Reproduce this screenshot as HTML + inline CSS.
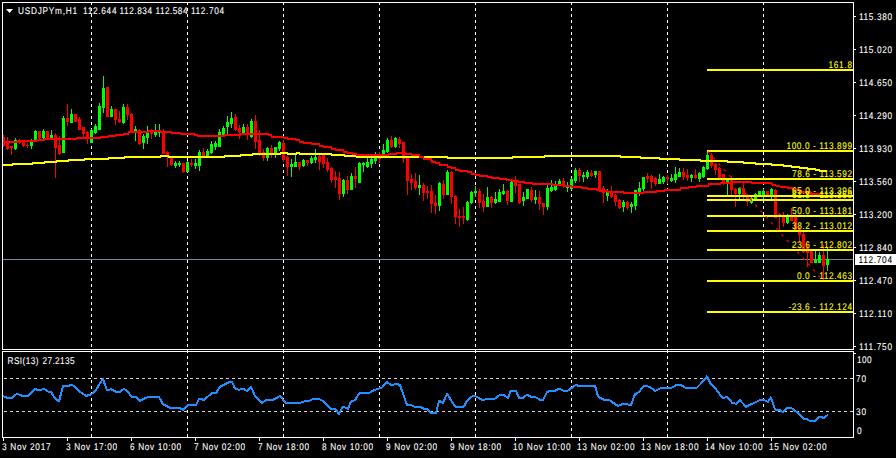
<!DOCTYPE html>
<html><head><meta charset="utf-8"><style>
html,body{margin:0;padding:0;background:#000;width:896px;height:458px;overflow:hidden;position:relative}
text{white-space:pre}
</style></head><body>
<svg width="896" height="458" viewBox="0 0 896 458" style="position:absolute;left:0;top:0" font-family='"Liberation Sans", sans-serif'>
<rect x="0" y="0" width="896" height="458" fill="#000"/>
<g shape-rendering="crispEdges">
<line x1="91.5" y1="2" x2="91.5" y2="349" stroke="#fff" stroke-width="1" stroke-dasharray="3 3" stroke-dashoffset="0"/>
<line x1="91.5" y1="350" x2="91.5" y2="437" stroke="#fff" stroke-width="1" stroke-dasharray="3 3" stroke-dashoffset="0"/>
<line x1="187.5" y1="2" x2="187.5" y2="349" stroke="#fff" stroke-width="1" stroke-dasharray="3 3" stroke-dashoffset="0"/>
<line x1="187.5" y1="350" x2="187.5" y2="437" stroke="#fff" stroke-width="1" stroke-dasharray="3 3" stroke-dashoffset="0"/>
<line x1="283.5" y1="2" x2="283.5" y2="349" stroke="#fff" stroke-width="1" stroke-dasharray="3 3" stroke-dashoffset="0"/>
<line x1="283.5" y1="350" x2="283.5" y2="437" stroke="#fff" stroke-width="1" stroke-dasharray="3 3" stroke-dashoffset="0"/>
<line x1="379.5" y1="2" x2="379.5" y2="349" stroke="#fff" stroke-width="1" stroke-dasharray="3 3" stroke-dashoffset="0"/>
<line x1="379.5" y1="350" x2="379.5" y2="437" stroke="#fff" stroke-width="1" stroke-dasharray="3 3" stroke-dashoffset="0"/>
<line x1="475.5" y1="2" x2="475.5" y2="349" stroke="#fff" stroke-width="1" stroke-dasharray="3 3" stroke-dashoffset="0"/>
<line x1="475.5" y1="350" x2="475.5" y2="437" stroke="#fff" stroke-width="1" stroke-dasharray="3 3" stroke-dashoffset="0"/>
<line x1="571.5" y1="2" x2="571.5" y2="349" stroke="#fff" stroke-width="1" stroke-dasharray="3 3" stroke-dashoffset="0"/>
<line x1="571.5" y1="350" x2="571.5" y2="437" stroke="#fff" stroke-width="1" stroke-dasharray="3 3" stroke-dashoffset="0"/>
<line x1="667.5" y1="2" x2="667.5" y2="349" stroke="#fff" stroke-width="1" stroke-dasharray="3 3" stroke-dashoffset="0"/>
<line x1="667.5" y1="350" x2="667.5" y2="437" stroke="#fff" stroke-width="1" stroke-dasharray="3 3" stroke-dashoffset="0"/>
<line x1="763.5" y1="2" x2="763.5" y2="349" stroke="#fff" stroke-width="1" stroke-dasharray="3 3" stroke-dashoffset="0"/>
<line x1="763.5" y1="350" x2="763.5" y2="437" stroke="#fff" stroke-width="1" stroke-dasharray="3 3" stroke-dashoffset="0"/>
<line x1="4" y1="378.5" x2="853" y2="378.5" stroke="#d3d3d3" stroke-width="1" stroke-dasharray="3 3"/>
<line x1="4" y1="411.5" x2="853" y2="411.5" stroke="#d3d3d3" stroke-width="1" stroke-dasharray="3 3"/>
</g>
<g shape-rendering="crispEdges">
<rect x="3" y="259" width="850" height="1" fill="#778899"/>
</g>
<g shape-rendering="crispEdges">
<rect x="3" y="135" width="1" height="12" fill="#ff0000"/>
<rect x="2" y="137" width="3" height="9" fill="#ff0000"/>
<rect x="7" y="137" width="1" height="13" fill="#ff0000"/>
<rect x="6" y="142" width="3" height="7" fill="#ff0000"/>
<rect x="11" y="146" width="1" height="9" fill="#ff0000"/>
<rect x="10" y="146" width="3" height="2" fill="#ff0000"/>
<rect x="15" y="138" width="1" height="12" fill="#00ff00"/>
<rect x="14" y="140" width="3" height="9" fill="#00ff00"/>
<rect x="19" y="139" width="1" height="5" fill="#ff0000"/>
<rect x="18" y="140" width="3" height="3" fill="#ff0000"/>
<rect x="23" y="141" width="1" height="6" fill="#ff0000"/>
<rect x="22" y="142" width="3" height="4" fill="#ff0000"/>
<rect x="27" y="143" width="1" height="5" fill="#ff0000"/>
<rect x="26" y="145" width="3" height="1" fill="#ff0000"/>
<rect x="31" y="139" width="1" height="10" fill="#00ff00"/>
<rect x="30" y="141" width="3" height="5" fill="#00ff00"/>
<rect x="35" y="130" width="1" height="12" fill="#00ff00"/>
<rect x="34" y="131" width="3" height="10" fill="#00ff00"/>
<rect x="39" y="131" width="1" height="9" fill="#ff0000"/>
<rect x="38" y="131" width="3" height="7" fill="#ff0000"/>
<rect x="43" y="129" width="1" height="10" fill="#00ff00"/>
<rect x="42" y="131" width="3" height="7" fill="#00ff00"/>
<rect x="47" y="131" width="1" height="8" fill="#ff0000"/>
<rect x="46" y="131" width="3" height="7" fill="#ff0000"/>
<rect x="51" y="130" width="1" height="9" fill="#00ff00"/>
<rect x="50" y="135" width="3" height="3" fill="#00ff00"/>
<rect x="55" y="133" width="1" height="45" fill="#ff0000"/>
<rect x="54" y="135" width="3" height="13" fill="#ff0000"/>
<rect x="59" y="136" width="1" height="19" fill="#ff0000"/>
<rect x="58" y="145" width="3" height="9" fill="#ff0000"/>
<rect x="63" y="116" width="1" height="37" fill="#00ff00"/>
<rect x="62" y="118" width="3" height="35" fill="#00ff00"/>
<rect x="67" y="104" width="1" height="22" fill="#ff0000"/>
<rect x="66" y="118" width="3" height="4" fill="#ff0000"/>
<rect x="71" y="109" width="1" height="14" fill="#00ff00"/>
<rect x="70" y="114" width="3" height="9" fill="#00ff00"/>
<rect x="75" y="114" width="1" height="8" fill="#ff0000"/>
<rect x="74" y="114" width="3" height="8" fill="#ff0000"/>
<rect x="79" y="117" width="1" height="13" fill="#ff0000"/>
<rect x="78" y="119" width="3" height="11" fill="#ff0000"/>
<rect x="83" y="127" width="1" height="11" fill="#ff0000"/>
<rect x="82" y="127" width="3" height="7" fill="#ff0000"/>
<rect x="87" y="131" width="1" height="13" fill="#ff0000"/>
<rect x="86" y="132" width="3" height="7" fill="#ff0000"/>
<rect x="91" y="129" width="1" height="14" fill="#00ff00"/>
<rect x="90" y="130" width="3" height="13" fill="#00ff00"/>
<rect x="95" y="124" width="1" height="10" fill="#00ff00"/>
<rect x="94" y="126" width="3" height="7" fill="#00ff00"/>
<rect x="99" y="103" width="1" height="27" fill="#00ff00"/>
<rect x="98" y="106" width="3" height="24" fill="#00ff00"/>
<rect x="103" y="76" width="1" height="37" fill="#00ff00"/>
<rect x="102" y="88" width="3" height="20" fill="#00ff00"/>
<rect x="107" y="87" width="1" height="30" fill="#ff0000"/>
<rect x="106" y="87" width="3" height="30" fill="#ff0000"/>
<rect x="111" y="106" width="1" height="11" fill="#00ff00"/>
<rect x="110" y="109" width="3" height="8" fill="#00ff00"/>
<rect x="115" y="109" width="1" height="16" fill="#ff0000"/>
<rect x="114" y="109" width="3" height="11" fill="#ff0000"/>
<rect x="119" y="111" width="1" height="12" fill="#ff0000"/>
<rect x="118" y="119" width="3" height="3" fill="#ff0000"/>
<rect x="123" y="104" width="1" height="20" fill="#00ff00"/>
<rect x="122" y="107" width="3" height="16" fill="#00ff00"/>
<rect x="127" y="104" width="1" height="16" fill="#ff0000"/>
<rect x="126" y="107" width="3" height="8" fill="#ff0000"/>
<rect x="131" y="113" width="1" height="20" fill="#ff0000"/>
<rect x="130" y="114" width="3" height="19" fill="#ff0000"/>
<rect x="135" y="126" width="1" height="15" fill="#00ff00"/>
<rect x="134" y="129" width="3" height="4" fill="#00ff00"/>
<rect x="139" y="129" width="1" height="16" fill="#ff0000"/>
<rect x="138" y="130" width="3" height="14" fill="#ff0000"/>
<rect x="143" y="134" width="1" height="15" fill="#00ff00"/>
<rect x="142" y="136" width="3" height="7" fill="#00ff00"/>
<rect x="147" y="126" width="1" height="18" fill="#00ff00"/>
<rect x="146" y="132" width="3" height="6" fill="#00ff00"/>
<rect x="151" y="129" width="1" height="10" fill="#ff0000"/>
<rect x="150" y="130" width="3" height="4" fill="#ff0000"/>
<rect x="155" y="124" width="1" height="13" fill="#00ff00"/>
<rect x="154" y="132" width="3" height="3" fill="#00ff00"/>
<rect x="159" y="124" width="1" height="13" fill="#00ff00"/>
<rect x="158" y="132" width="3" height="1" fill="#00ff00"/>
<rect x="163" y="129" width="1" height="25" fill="#ff0000"/>
<rect x="162" y="132" width="3" height="22" fill="#ff0000"/>
<rect x="167" y="151" width="1" height="16" fill="#ff0000"/>
<rect x="166" y="152" width="3" height="5" fill="#ff0000"/>
<rect x="171" y="158" width="1" height="8" fill="#ff0000"/>
<rect x="170" y="158" width="3" height="7" fill="#ff0000"/>
<rect x="175" y="161" width="1" height="7" fill="#00ff00"/>
<rect x="174" y="163" width="3" height="3" fill="#00ff00"/>
<rect x="179" y="161" width="1" height="6" fill="#00ff00"/>
<rect x="178" y="163" width="3" height="2" fill="#00ff00"/>
<rect x="183" y="163" width="1" height="10" fill="#ff0000"/>
<rect x="182" y="163" width="3" height="9" fill="#ff0000"/>
<rect x="187" y="161" width="1" height="11" fill="#00ff00"/>
<rect x="186" y="162" width="3" height="10" fill="#00ff00"/>
<rect x="191" y="159" width="1" height="8" fill="#ff0000"/>
<rect x="190" y="163" width="3" height="2" fill="#ff0000"/>
<rect x="195" y="159" width="1" height="10" fill="#00ff00"/>
<rect x="194" y="163" width="3" height="3" fill="#00ff00"/>
<rect x="199" y="150" width="1" height="21" fill="#00ff00"/>
<rect x="198" y="152" width="3" height="14" fill="#00ff00"/>
<rect x="203" y="148" width="1" height="9" fill="#ff0000"/>
<rect x="202" y="152" width="3" height="5" fill="#ff0000"/>
<rect x="207" y="149" width="1" height="8" fill="#00ff00"/>
<rect x="206" y="151" width="3" height="6" fill="#00ff00"/>
<rect x="211" y="141" width="1" height="13" fill="#00ff00"/>
<rect x="210" y="144" width="3" height="9" fill="#00ff00"/>
<rect x="215" y="141" width="1" height="9" fill="#00ff00"/>
<rect x="214" y="143" width="3" height="4" fill="#00ff00"/>
<rect x="219" y="129" width="1" height="18" fill="#00ff00"/>
<rect x="218" y="132" width="3" height="15" fill="#00ff00"/>
<rect x="223" y="126" width="1" height="10" fill="#00ff00"/>
<rect x="222" y="128" width="3" height="7" fill="#00ff00"/>
<rect x="227" y="116" width="1" height="18" fill="#00ff00"/>
<rect x="226" y="122" width="3" height="5" fill="#00ff00"/>
<rect x="231" y="112" width="1" height="16" fill="#00ff00"/>
<rect x="230" y="118" width="3" height="6" fill="#00ff00"/>
<rect x="235" y="114" width="1" height="17" fill="#ff0000"/>
<rect x="234" y="117" width="3" height="13" fill="#ff0000"/>
<rect x="239" y="125" width="1" height="14" fill="#ff0000"/>
<rect x="238" y="128" width="3" height="4" fill="#ff0000"/>
<rect x="243" y="124" width="1" height="10" fill="#00ff00"/>
<rect x="242" y="127" width="3" height="6" fill="#00ff00"/>
<rect x="247" y="124" width="1" height="16" fill="#ff0000"/>
<rect x="246" y="127" width="3" height="7" fill="#ff0000"/>
<rect x="251" y="119" width="1" height="19" fill="#00ff00"/>
<rect x="250" y="121" width="3" height="16" fill="#00ff00"/>
<rect x="255" y="115" width="1" height="34" fill="#ff0000"/>
<rect x="254" y="121" width="3" height="21" fill="#ff0000"/>
<rect x="259" y="130" width="1" height="26" fill="#ff0000"/>
<rect x="258" y="140" width="3" height="15" fill="#ff0000"/>
<rect x="263" y="149" width="1" height="12" fill="#ff0000"/>
<rect x="262" y="152" width="3" height="6" fill="#ff0000"/>
<rect x="267" y="147" width="1" height="14" fill="#00ff00"/>
<rect x="266" y="148" width="3" height="10" fill="#00ff00"/>
<rect x="271" y="145" width="1" height="13" fill="#ff0000"/>
<rect x="270" y="148" width="3" height="7" fill="#ff0000"/>
<rect x="275" y="147" width="1" height="11" fill="#00ff00"/>
<rect x="274" y="147" width="3" height="7" fill="#00ff00"/>
<rect x="279" y="141" width="1" height="10" fill="#00ff00"/>
<rect x="278" y="142" width="3" height="7" fill="#00ff00"/>
<rect x="283" y="140" width="1" height="22" fill="#ff0000"/>
<rect x="282" y="143" width="3" height="17" fill="#ff0000"/>
<rect x="287" y="156" width="1" height="20" fill="#ff0000"/>
<rect x="286" y="157" width="3" height="10" fill="#ff0000"/>
<rect x="291" y="159" width="1" height="18" fill="#00ff00"/>
<rect x="290" y="164" width="3" height="3" fill="#00ff00"/>
<rect x="295" y="154" width="1" height="13" fill="#00ff00"/>
<rect x="294" y="162" width="3" height="5" fill="#00ff00"/>
<rect x="299" y="162" width="1" height="8" fill="#ff0000"/>
<rect x="298" y="162" width="3" height="5" fill="#ff0000"/>
<rect x="303" y="159" width="1" height="8" fill="#00ff00"/>
<rect x="302" y="160" width="3" height="6" fill="#00ff00"/>
<rect x="307" y="160" width="1" height="6" fill="#ff0000"/>
<rect x="306" y="160" width="3" height="3" fill="#ff0000"/>
<rect x="311" y="156" width="1" height="8" fill="#00ff00"/>
<rect x="310" y="158" width="3" height="5" fill="#00ff00"/>
<rect x="315" y="149" width="1" height="14" fill="#00ff00"/>
<rect x="314" y="157" width="3" height="3" fill="#00ff00"/>
<rect x="319" y="155" width="1" height="15" fill="#ff0000"/>
<rect x="318" y="156" width="3" height="6" fill="#ff0000"/>
<rect x="323" y="154" width="1" height="14" fill="#ff0000"/>
<rect x="322" y="155" width="3" height="9" fill="#ff0000"/>
<rect x="327" y="158" width="1" height="14" fill="#ff0000"/>
<rect x="326" y="162" width="3" height="8" fill="#ff0000"/>
<rect x="331" y="167" width="1" height="16" fill="#ff0000"/>
<rect x="330" y="168" width="3" height="12" fill="#ff0000"/>
<rect x="335" y="171" width="1" height="17" fill="#ff0000"/>
<rect x="334" y="177" width="3" height="3" fill="#ff0000"/>
<rect x="339" y="172" width="1" height="28" fill="#ff0000"/>
<rect x="338" y="178" width="3" height="16" fill="#ff0000"/>
<rect x="343" y="179" width="1" height="18" fill="#00ff00"/>
<rect x="342" y="180" width="3" height="14" fill="#00ff00"/>
<rect x="347" y="176" width="1" height="18" fill="#ff0000"/>
<rect x="346" y="180" width="3" height="10" fill="#ff0000"/>
<rect x="351" y="173" width="1" height="17" fill="#00ff00"/>
<rect x="350" y="176" width="3" height="14" fill="#00ff00"/>
<rect x="355" y="167" width="1" height="21" fill="#ff0000"/>
<rect x="354" y="176" width="3" height="3" fill="#ff0000"/>
<rect x="359" y="162" width="1" height="21" fill="#00ff00"/>
<rect x="358" y="163" width="3" height="20" fill="#00ff00"/>
<rect x="363" y="162" width="1" height="10" fill="#00ff00"/>
<rect x="362" y="163" width="3" height="2" fill="#00ff00"/>
<rect x="367" y="157" width="1" height="11" fill="#00ff00"/>
<rect x="366" y="162" width="3" height="5" fill="#00ff00"/>
<rect x="371" y="157" width="1" height="11" fill="#00ff00"/>
<rect x="370" y="159" width="3" height="5" fill="#00ff00"/>
<rect x="375" y="152" width="1" height="12" fill="#00ff00"/>
<rect x="374" y="157" width="3" height="4" fill="#00ff00"/>
<rect x="379" y="152" width="1" height="11" fill="#ff0000"/>
<rect x="378" y="156" width="3" height="3" fill="#ff0000"/>
<rect x="383" y="144" width="1" height="14" fill="#00ff00"/>
<rect x="382" y="150" width="3" height="7" fill="#00ff00"/>
<rect x="387" y="138" width="1" height="15" fill="#00ff00"/>
<rect x="386" y="140" width="3" height="12" fill="#00ff00"/>
<rect x="391" y="136" width="1" height="12" fill="#ff0000"/>
<rect x="390" y="140" width="3" height="7" fill="#ff0000"/>
<rect x="395" y="137" width="1" height="11" fill="#00ff00"/>
<rect x="394" y="138" width="3" height="9" fill="#00ff00"/>
<rect x="399" y="137" width="1" height="11" fill="#ff0000"/>
<rect x="398" y="139" width="3" height="5" fill="#ff0000"/>
<rect x="403" y="142" width="1" height="21" fill="#ff0000"/>
<rect x="402" y="142" width="3" height="17" fill="#ff0000"/>
<rect x="407" y="158" width="1" height="37" fill="#ff0000"/>
<rect x="406" y="158" width="3" height="23" fill="#ff0000"/>
<rect x="411" y="174" width="1" height="16" fill="#ff0000"/>
<rect x="410" y="179" width="3" height="4" fill="#ff0000"/>
<rect x="415" y="173" width="1" height="17" fill="#ff0000"/>
<rect x="414" y="181" width="3" height="7" fill="#ff0000"/>
<rect x="419" y="175" width="1" height="20" fill="#00ff00"/>
<rect x="418" y="185" width="3" height="3" fill="#00ff00"/>
<rect x="423" y="183" width="1" height="18" fill="#ff0000"/>
<rect x="422" y="185" width="3" height="8" fill="#ff0000"/>
<rect x="427" y="186" width="1" height="13" fill="#ff0000"/>
<rect x="426" y="191" width="3" height="2" fill="#ff0000"/>
<rect x="431" y="185" width="1" height="28" fill="#ff0000"/>
<rect x="430" y="191" width="3" height="13" fill="#ff0000"/>
<rect x="435" y="195" width="1" height="19" fill="#ff0000"/>
<rect x="434" y="203" width="3" height="3" fill="#ff0000"/>
<rect x="439" y="182" width="1" height="29" fill="#00ff00"/>
<rect x="438" y="183" width="3" height="23" fill="#00ff00"/>
<rect x="443" y="180" width="1" height="19" fill="#ff0000"/>
<rect x="442" y="184" width="3" height="11" fill="#ff0000"/>
<rect x="447" y="170" width="1" height="25" fill="#00ff00"/>
<rect x="446" y="172" width="3" height="23" fill="#00ff00"/>
<rect x="451" y="171" width="1" height="33" fill="#ff0000"/>
<rect x="450" y="172" width="3" height="25" fill="#ff0000"/>
<rect x="455" y="195" width="1" height="29" fill="#ff0000"/>
<rect x="454" y="196" width="3" height="21" fill="#ff0000"/>
<rect x="459" y="209" width="1" height="18" fill="#ff0000"/>
<rect x="458" y="216" width="3" height="2" fill="#ff0000"/>
<rect x="463" y="207" width="1" height="17" fill="#ff0000"/>
<rect x="462" y="216" width="3" height="2" fill="#ff0000"/>
<rect x="467" y="201" width="1" height="20" fill="#00ff00"/>
<rect x="466" y="202" width="3" height="18" fill="#00ff00"/>
<rect x="471" y="191" width="1" height="13" fill="#00ff00"/>
<rect x="470" y="192" width="3" height="11" fill="#00ff00"/>
<rect x="475" y="186" width="1" height="11" fill="#00ff00"/>
<rect x="474" y="191" width="3" height="2" fill="#00ff00"/>
<rect x="479" y="189" width="1" height="19" fill="#ff0000"/>
<rect x="478" y="191" width="3" height="12" fill="#ff0000"/>
<rect x="483" y="194" width="1" height="18" fill="#ff0000"/>
<rect x="482" y="201" width="3" height="6" fill="#ff0000"/>
<rect x="487" y="187" width="1" height="20" fill="#00ff00"/>
<rect x="486" y="197" width="3" height="10" fill="#00ff00"/>
<rect x="491" y="196" width="1" height="12" fill="#ff0000"/>
<rect x="490" y="197" width="3" height="6" fill="#ff0000"/>
<rect x="495" y="192" width="1" height="12" fill="#00ff00"/>
<rect x="494" y="199" width="3" height="4" fill="#00ff00"/>
<rect x="499" y="189" width="1" height="13" fill="#00ff00"/>
<rect x="498" y="192" width="3" height="10" fill="#00ff00"/>
<rect x="503" y="184" width="1" height="11" fill="#00ff00"/>
<rect x="502" y="191" width="3" height="3" fill="#00ff00"/>
<rect x="507" y="190" width="1" height="15" fill="#ff0000"/>
<rect x="506" y="191" width="3" height="10" fill="#ff0000"/>
<rect x="511" y="180" width="1" height="22" fill="#00ff00"/>
<rect x="510" y="182" width="3" height="20" fill="#00ff00"/>
<rect x="515" y="176" width="1" height="17" fill="#ff0000"/>
<rect x="514" y="182" width="3" height="4" fill="#ff0000"/>
<rect x="519" y="184" width="1" height="20" fill="#ff0000"/>
<rect x="518" y="184" width="3" height="19" fill="#ff0000"/>
<rect x="523" y="192" width="1" height="14" fill="#00ff00"/>
<rect x="522" y="197" width="3" height="4" fill="#00ff00"/>
<rect x="527" y="189" width="1" height="10" fill="#00ff00"/>
<rect x="526" y="189" width="3" height="10" fill="#00ff00"/>
<rect x="531" y="187" width="1" height="15" fill="#ff0000"/>
<rect x="530" y="190" width="3" height="10" fill="#ff0000"/>
<rect x="535" y="190" width="1" height="14" fill="#00ff00"/>
<rect x="534" y="197" width="3" height="3" fill="#00ff00"/>
<rect x="539" y="191" width="1" height="19" fill="#ff0000"/>
<rect x="538" y="197" width="3" height="7" fill="#ff0000"/>
<rect x="543" y="203" width="1" height="12" fill="#ff0000"/>
<rect x="542" y="203" width="3" height="4" fill="#ff0000"/>
<rect x="547" y="185" width="1" height="25" fill="#00ff00"/>
<rect x="546" y="188" width="3" height="19" fill="#00ff00"/>
<rect x="551" y="180" width="1" height="12" fill="#00ff00"/>
<rect x="550" y="187" width="3" height="4" fill="#00ff00"/>
<rect x="555" y="181" width="1" height="10" fill="#00ff00"/>
<rect x="554" y="186" width="3" height="4" fill="#00ff00"/>
<rect x="559" y="179" width="1" height="7" fill="#00ff00"/>
<rect x="558" y="181" width="3" height="4" fill="#00ff00"/>
<rect x="563" y="178" width="1" height="10" fill="#ff0000"/>
<rect x="562" y="181" width="3" height="5" fill="#ff0000"/>
<rect x="567" y="182" width="1" height="10" fill="#00ff00"/>
<rect x="566" y="185" width="3" height="3" fill="#00ff00"/>
<rect x="571" y="178" width="1" height="12" fill="#00ff00"/>
<rect x="570" y="179" width="3" height="10" fill="#00ff00"/>
<rect x="575" y="168" width="1" height="15" fill="#00ff00"/>
<rect x="574" y="170" width="3" height="11" fill="#00ff00"/>
<rect x="579" y="168" width="1" height="14" fill="#ff0000"/>
<rect x="578" y="170" width="3" height="6" fill="#ff0000"/>
<rect x="583" y="172" width="1" height="10" fill="#00ff00"/>
<rect x="582" y="175" width="3" height="2" fill="#00ff00"/>
<rect x="587" y="170" width="1" height="9" fill="#00ff00"/>
<rect x="586" y="172" width="3" height="5" fill="#00ff00"/>
<rect x="591" y="170" width="1" height="7" fill="#ff0000"/>
<rect x="590" y="173" width="3" height="3" fill="#ff0000"/>
<rect x="595" y="171" width="1" height="7" fill="#00ff00"/>
<rect x="594" y="171" width="3" height="4" fill="#00ff00"/>
<rect x="599" y="171" width="1" height="19" fill="#ff0000"/>
<rect x="598" y="171" width="3" height="19" fill="#ff0000"/>
<rect x="603" y="186" width="1" height="17" fill="#ff0000"/>
<rect x="602" y="188" width="3" height="5" fill="#ff0000"/>
<rect x="607" y="189" width="1" height="12" fill="#00ff00"/>
<rect x="606" y="192" width="3" height="4" fill="#00ff00"/>
<rect x="611" y="186" width="1" height="12" fill="#ff0000"/>
<rect x="610" y="191" width="3" height="6" fill="#ff0000"/>
<rect x="615" y="194" width="1" height="12" fill="#ff0000"/>
<rect x="614" y="195" width="3" height="7" fill="#ff0000"/>
<rect x="619" y="199" width="1" height="10" fill="#ff0000"/>
<rect x="618" y="200" width="3" height="8" fill="#ff0000"/>
<rect x="623" y="200" width="1" height="12" fill="#00ff00"/>
<rect x="622" y="202" width="3" height="5" fill="#00ff00"/>
<rect x="627" y="201" width="1" height="9" fill="#ff0000"/>
<rect x="626" y="202" width="3" height="6" fill="#ff0000"/>
<rect x="631" y="202" width="1" height="11" fill="#00ff00"/>
<rect x="630" y="204" width="3" height="3" fill="#00ff00"/>
<rect x="635" y="190" width="1" height="20" fill="#00ff00"/>
<rect x="634" y="190" width="3" height="16" fill="#00ff00"/>
<rect x="639" y="182" width="1" height="14" fill="#00ff00"/>
<rect x="638" y="188" width="3" height="6" fill="#00ff00"/>
<rect x="643" y="177" width="1" height="16" fill="#00ff00"/>
<rect x="642" y="177" width="3" height="12" fill="#00ff00"/>
<rect x="647" y="173" width="1" height="10" fill="#ff0000"/>
<rect x="646" y="176" width="3" height="3" fill="#ff0000"/>
<rect x="651" y="175" width="1" height="14" fill="#ff0000"/>
<rect x="650" y="176" width="3" height="6" fill="#ff0000"/>
<rect x="655" y="177" width="1" height="9" fill="#ff0000"/>
<rect x="654" y="178" width="3" height="6" fill="#ff0000"/>
<rect x="659" y="174" width="1" height="10" fill="#00ff00"/>
<rect x="658" y="179" width="3" height="5" fill="#00ff00"/>
<rect x="663" y="176" width="1" height="8" fill="#00ff00"/>
<rect x="662" y="177" width="3" height="5" fill="#00ff00"/>
<rect x="667" y="175" width="1" height="9" fill="#ff0000"/>
<rect x="666" y="177" width="3" height="2" fill="#ff0000"/>
<rect x="671" y="174" width="1" height="8" fill="#00ff00"/>
<rect x="670" y="178" width="3" height="3" fill="#00ff00"/>
<rect x="675" y="167" width="1" height="16" fill="#00ff00"/>
<rect x="674" y="174" width="3" height="6" fill="#00ff00"/>
<rect x="679" y="168" width="1" height="9" fill="#00ff00"/>
<rect x="678" y="172" width="3" height="5" fill="#00ff00"/>
<rect x="683" y="168" width="1" height="12" fill="#ff0000"/>
<rect x="682" y="172" width="3" height="5" fill="#ff0000"/>
<rect x="687" y="169" width="1" height="12" fill="#ff0000"/>
<rect x="686" y="175" width="3" height="3" fill="#ff0000"/>
<rect x="691" y="174" width="1" height="8" fill="#00ff00"/>
<rect x="690" y="175" width="3" height="3" fill="#00ff00"/>
<rect x="695" y="169" width="1" height="10" fill="#ff0000"/>
<rect x="694" y="175" width="3" height="3" fill="#ff0000"/>
<rect x="699" y="172" width="1" height="10" fill="#00ff00"/>
<rect x="698" y="173" width="3" height="6" fill="#00ff00"/>
<rect x="703" y="166" width="1" height="12" fill="#00ff00"/>
<rect x="702" y="167" width="3" height="10" fill="#00ff00"/>
<rect x="707" y="150" width="1" height="20" fill="#00ff00"/>
<rect x="706" y="155" width="3" height="14" fill="#00ff00"/>
<rect x="711" y="153" width="1" height="15" fill="#ff0000"/>
<rect x="710" y="155" width="3" height="11" fill="#ff0000"/>
<rect x="715" y="163" width="1" height="12" fill="#ff0000"/>
<rect x="714" y="164" width="3" height="6" fill="#ff0000"/>
<rect x="719" y="167" width="1" height="12" fill="#ff0000"/>
<rect x="718" y="168" width="3" height="10" fill="#ff0000"/>
<rect x="723" y="174" width="1" height="11" fill="#ff0000"/>
<rect x="722" y="174" width="3" height="9" fill="#ff0000"/>
<rect x="727" y="179" width="1" height="16" fill="#00ff00"/>
<rect x="726" y="180" width="3" height="3" fill="#00ff00"/>
<rect x="731" y="176" width="1" height="19" fill="#ff0000"/>
<rect x="730" y="180" width="3" height="10" fill="#ff0000"/>
<rect x="735" y="188" width="1" height="19" fill="#ff0000"/>
<rect x="734" y="189" width="3" height="5" fill="#ff0000"/>
<rect x="739" y="187" width="1" height="13" fill="#00ff00"/>
<rect x="738" y="188" width="3" height="6" fill="#00ff00"/>
<rect x="743" y="182" width="1" height="18" fill="#ff0000"/>
<rect x="742" y="188" width="3" height="8" fill="#ff0000"/>
<rect x="747" y="194" width="1" height="12" fill="#ff0000"/>
<rect x="746" y="195" width="3" height="7" fill="#ff0000"/>
<rect x="751" y="197" width="1" height="7" fill="#00ff00"/>
<rect x="750" y="198" width="3" height="5" fill="#00ff00"/>
<rect x="755" y="193" width="1" height="7" fill="#00ff00"/>
<rect x="754" y="194" width="3" height="6" fill="#00ff00"/>
<rect x="759" y="191" width="1" height="6" fill="#00ff00"/>
<rect x="758" y="191" width="3" height="5" fill="#00ff00"/>
<rect x="763" y="189" width="1" height="10" fill="#00ff00"/>
<rect x="762" y="191" width="3" height="5" fill="#00ff00"/>
<rect x="767" y="191" width="1" height="6" fill="#ff0000"/>
<rect x="766" y="191" width="3" height="5" fill="#ff0000"/>
<rect x="771" y="188" width="1" height="12" fill="#00ff00"/>
<rect x="770" y="189" width="3" height="7" fill="#00ff00"/>
<rect x="775" y="189" width="1" height="29" fill="#ff0000"/>
<rect x="774" y="190" width="3" height="28" fill="#ff0000"/>
<rect x="779" y="213" width="1" height="18" fill="#ff0000"/>
<rect x="778" y="214" width="3" height="3" fill="#ff0000"/>
<rect x="783" y="212" width="1" height="15" fill="#ff0000"/>
<rect x="782" y="216" width="3" height="7" fill="#ff0000"/>
<rect x="787" y="214" width="1" height="10" fill="#00ff00"/>
<rect x="786" y="215" width="3" height="8" fill="#00ff00"/>
<rect x="791" y="208" width="1" height="13" fill="#ff0000"/>
<rect x="790" y="217" width="3" height="4" fill="#ff0000"/>
<rect x="795" y="214" width="1" height="17" fill="#ff0000"/>
<rect x="794" y="215" width="3" height="16" fill="#ff0000"/>
<rect x="799" y="227" width="1" height="16" fill="#ff0000"/>
<rect x="798" y="229" width="3" height="6" fill="#ff0000"/>
<rect x="803" y="232" width="1" height="21" fill="#ff0000"/>
<rect x="802" y="234" width="3" height="18" fill="#ff0000"/>
<rect x="807" y="244" width="1" height="23" fill="#ff0000"/>
<rect x="806" y="248" width="3" height="5" fill="#ff0000"/>
<rect x="811" y="251" width="1" height="12" fill="#ff0000"/>
<rect x="810" y="251" width="3" height="12" fill="#ff0000"/>
<rect x="815" y="251" width="1" height="12" fill="#00ff00"/>
<rect x="814" y="260" width="3" height="3" fill="#00ff00"/>
<rect x="819" y="252" width="1" height="11" fill="#00ff00"/>
<rect x="818" y="255" width="3" height="8" fill="#00ff00"/>
<rect x="823" y="245" width="1" height="37" fill="#ff0000"/>
<rect x="822" y="255" width="3" height="11" fill="#ff0000"/>
<rect x="827" y="247" width="1" height="24" fill="#00ff00"/>
<rect x="826" y="259" width="3" height="6" fill="#00ff00"/>
</g>
<polyline points="3,165 12,165 13,164 32,164 33,163 44,163 45,162 56,162 57,161 68,161 69,160 84,160 85,159 108,159 109,158 124,158 125,157 160,157 161,156 168,156 169,157 224,157 225,156 240,156 241,155 252,155 253,154 280,154 281,153 287,153 288,154 296,154 297,153 299,153 300,154 331,154 332,155 344,155 345,156 356,156 357,157 447,157 448,158 512,158 513,157 544,157 545,156 620,156 621,157 640,157 641,158 659,158 660,159 679,159 680,160 700,160 701,161 727,161 728,162 743,162 744,163 755,163 756,164 771,164 772,165 783,165 784,166 791,166 792,167 799,167 800,168 807,168 808,169 815,169 816,170 819,170 820,171 827,171" fill="none" stroke="#ffff00" stroke-width="2" stroke-linejoin="round" shape-rendering="crispEdges"/>
<polyline points="3,142 19,142 20,141 36,141 37,140 44,140 45,139 76,139 77,138 100,138 101,137 108,137 109,136 115,136 116,135 123,135 124,134 128,134 129,132 148,132 149,131 160,131 161,132 171,132 172,133 180,133 181,134 194,134 195,135 197,135 198,136 224,136 225,135 240,135 241,134 268,134 269,135 271,135 272,137 283,137 284,138 287,138 288,139 295,139 296,140 299,140 300,142 303,142 304,143 311,143 312,144 319,144 320,146 323,146 324,147 331,147 332,149 335,149 336,150 343,150 344,152 347,152 348,153 352,153 353,154 356,154 357,155 388,155 389,154 396,154 397,153 404,153 405,154 411,154 412,155 419,155 420,157 423,157 424,159 431,159 432,162 435,162 436,163 439,163 440,165 447,165 448,167 451,167 452,168 455,168 456,170 459,170 460,171 467,171 468,172 471,172 472,174 475,174 476,175 479,175 480,176 487,176 488,177 491,177 492,178 499,178 500,179 506,179 507,180 512,180 513,181 518,181 519,182 524,182 525,183 532,183 533,184 552,184 553,185 563,185 564,186 571,186 572,187 581,187 582,188 587,188 588,189 596,189 597,190 599,190 600,191 607,191 608,192 623,192 624,193 643,193 644,192 656,192 657,191 664,191 665,190 680,190 681,188 688,188 689,187 696,187 697,186 708,186 709,184 720,184 721,183 731,183 732,182 751,182 752,183 771,183 772,184.5 775,184.5 776,185.5 779,185.5 780,186.5 787,186.5 788,188 792,188 793,189.5 800,189.5 801,191.5 810,191.5 811,193.7 820,193.7 821,197 827,197" fill="none" stroke="#ff0000" stroke-width="2" stroke-linejoin="round" shape-rendering="crispEdges"/>
<g shape-rendering="crispEdges">
<rect x="707" y="69" width="146" height="2" fill="#ffff00"/>
<rect x="707" y="150" width="146" height="2" fill="#ffff00"/>
<rect x="707" y="178" width="146" height="2" fill="#ffff00"/>
<rect x="707" y="195" width="146" height="2" fill="#ffff00"/>
<rect x="707" y="199" width="146" height="2" fill="#ffff00"/>
<rect x="707" y="215" width="146" height="2" fill="#ffff00"/>
<rect x="707" y="230" width="146" height="2" fill="#ffff00"/>
<rect x="707" y="249" width="146" height="2" fill="#ffff00"/>
<rect x="707" y="280" width="146" height="2" fill="#ffff00"/>
<rect x="707" y="311" width="146" height="2" fill="#ffff00"/>
</g>
<line x1="707" y1="150.5" x2="823" y2="280.5" stroke="#ff0000" stroke-width="1.25" stroke-dasharray="2.6 5.3" stroke-dashoffset="-1.5"/>
<g shape-rendering="crispEdges" fill="#fff">
<rect x="2" y="2" width="852" height="1"/>
<rect x="2" y="2" width="1" height="348"/>
<rect x="853" y="2" width="1" height="348"/>
<rect x="2" y="349" width="852" height="1"/>
<rect x="2" y="351" width="852" height="1"/>
<rect x="2" y="351" width="1" height="87"/>
<rect x="853" y="351" width="1" height="87"/>
<rect x="2" y="437" width="852" height="1"/>
<rect x="854" y="16" width="2" height="1"/>
<rect x="854" y="49" width="2" height="1"/>
<rect x="854" y="82" width="2" height="1"/>
<rect x="854" y="115" width="2" height="1"/>
<rect x="854" y="148" width="2" height="1"/>
<rect x="854" y="181" width="2" height="1"/>
<rect x="854" y="214" width="2" height="1"/>
<rect x="854" y="247" width="2" height="1"/>
<rect x="854" y="280" width="2" height="1"/>
<rect x="854" y="313" width="2" height="1"/>
<rect x="854" y="346" width="2" height="1"/>
<rect x="854" y="353" width="2" height="1"/>
<rect x="3" y="438" width="1" height="3"/>
<rect x="67" y="438" width="1" height="3"/>
<rect x="131" y="438" width="1" height="3"/>
<rect x="195" y="438" width="1" height="3"/>
<rect x="259" y="438" width="1" height="3"/>
<rect x="323" y="438" width="1" height="3"/>
<rect x="387" y="438" width="1" height="3"/>
<rect x="451" y="438" width="1" height="3"/>
<rect x="515" y="438" width="1" height="3"/>
<rect x="579" y="438" width="1" height="3"/>
<rect x="643" y="438" width="1" height="3"/>
<rect x="707" y="438" width="1" height="3"/>
<rect x="771" y="438" width="1" height="3"/>
</g>
<rect x="855" y="254" width="41" height="11" fill="#fff" shape-rendering="crispEdges"/>
<text text-rendering="geometricPrecision" transform="scale(0.85,1)" x="21.176" y="14" fill="#fff" font-size="9.7" textLength="69.412" lengthAdjust="spacing" stroke="#fff" stroke-width="0.1">USDJPYm,H1</text>
<text text-rendering="geometricPrecision" transform="scale(0.85,1)" x="97.647" y="14" fill="#fff" font-size="9.7" textLength="39.412" lengthAdjust="spacing" stroke="#fff" stroke-width="0.1">112.644</text>
<text text-rendering="geometricPrecision" transform="scale(0.85,1)" x="140.588" y="14" fill="#fff" font-size="9.7" textLength="38.235" lengthAdjust="spacing" stroke="#fff" stroke-width="0.1">112.834</text>
<text text-rendering="geometricPrecision" transform="scale(0.85,1)" x="182.941" y="14" fill="#fff" font-size="9.7" textLength="37.647" lengthAdjust="spacing" stroke="#fff" stroke-width="0.1">112.584</text>
<text text-rendering="geometricPrecision" transform="scale(0.85,1)" x="224.706" y="14" fill="#fff" font-size="9.7" textLength="38.824" lengthAdjust="spacing" stroke="#fff" stroke-width="0.1">112.704</text>
<text text-rendering="geometricPrecision" transform="scale(0.85,1)" x="1010.588" y="20" fill="#fff" font-size="9.7" textLength="38.824" lengthAdjust="spacing" stroke="#fff" stroke-width="0.1">115.380</text>
<text text-rendering="geometricPrecision" transform="scale(0.85,1)" x="1010.588" y="53" fill="#fff" font-size="9.7" textLength="38.824" lengthAdjust="spacing" stroke="#fff" stroke-width="0.1">115.020</text>
<text text-rendering="geometricPrecision" transform="scale(0.85,1)" x="1010.588" y="86" fill="#fff" font-size="9.7" textLength="38.824" lengthAdjust="spacing" stroke="#fff" stroke-width="0.1">114.650</text>
<text text-rendering="geometricPrecision" transform="scale(0.85,1)" x="1010.588" y="119" fill="#fff" font-size="9.7" textLength="38.824" lengthAdjust="spacing" stroke="#fff" stroke-width="0.1">114.290</text>
<text text-rendering="geometricPrecision" transform="scale(0.85,1)" x="1010.588" y="152" fill="#fff" font-size="9.7" textLength="38.824" lengthAdjust="spacing" stroke="#fff" stroke-width="0.1">113.930</text>
<text text-rendering="geometricPrecision" transform="scale(0.85,1)" x="1010.588" y="185" fill="#fff" font-size="9.7" textLength="38.824" lengthAdjust="spacing" stroke="#fff" stroke-width="0.1">113.560</text>
<text text-rendering="geometricPrecision" transform="scale(0.85,1)" x="1010.588" y="218" fill="#fff" font-size="9.7" textLength="38.824" lengthAdjust="spacing" stroke="#fff" stroke-width="0.1">113.200</text>
<text text-rendering="geometricPrecision" transform="scale(0.85,1)" x="1010.588" y="251" fill="#fff" font-size="9.7" textLength="38.824" lengthAdjust="spacing" stroke="#fff" stroke-width="0.1">112.840</text>
<text text-rendering="geometricPrecision" transform="scale(0.85,1)" x="1010.588" y="284" fill="#fff" font-size="9.7" textLength="38.824" lengthAdjust="spacing" stroke="#fff" stroke-width="0.1">112.470</text>
<text text-rendering="geometricPrecision" transform="scale(0.85,1)" x="1010.588" y="317" fill="#fff" font-size="9.7" textLength="38.824" lengthAdjust="spacing" stroke="#fff" stroke-width="0.1">112.110</text>
<text text-rendering="geometricPrecision" transform="scale(0.85,1)" x="1010.588" y="350" fill="#fff" font-size="9.7" textLength="38.824" lengthAdjust="spacing" stroke="#fff" stroke-width="0.1">111.750</text>
<text text-rendering="geometricPrecision" transform="scale(0.85,1)" x="1010.000" y="263" fill="#000" font-size="9.7" textLength="39.412" lengthAdjust="spacing" stroke="#000" stroke-width="0.1">112.704</text>
<text text-rendering="geometricPrecision" transform="scale(0.85,1)" x="1008.235" y="363" fill="#fff" font-size="9.7" textLength="17.059" lengthAdjust="spacing" stroke="#fff" stroke-width="0.1">100</text>
<text text-rendering="geometricPrecision" transform="scale(0.85,1)" x="1007.059" y="382" fill="#fff" font-size="9.7" textLength="11.765" lengthAdjust="spacing" stroke="#fff" stroke-width="0.1">70</text>
<text text-rendering="geometricPrecision" transform="scale(0.85,1)" x="1007.059" y="415" fill="#fff" font-size="9.7" textLength="11.765" lengthAdjust="spacing" stroke="#fff" stroke-width="0.1">30</text>
<text text-rendering="geometricPrecision" transform="scale(0.85,1)" x="1008.235" y="434" fill="#fff" font-size="9.7" textLength="10.000" lengthAdjust="spacing" stroke="#fff" stroke-width="0.1">0</text>
<text text-rendering="geometricPrecision" transform="scale(0.85,1)" x="2.353" y="450" fill="#fff" font-size="9.7" textLength="57.059" lengthAdjust="spacing" stroke="#fff" stroke-width="0.1">3 Nov 2017</text>
<text text-rendering="geometricPrecision" transform="scale(0.85,1)" x="77.647" y="450" fill="#fff" font-size="9.7" textLength="60.000" lengthAdjust="spacing" stroke="#fff" stroke-width="0.1">3 Nov 17:00</text>
<text text-rendering="geometricPrecision" transform="scale(0.85,1)" x="152.941" y="450" fill="#fff" font-size="9.7" textLength="60.000" lengthAdjust="spacing" stroke="#fff" stroke-width="0.1">6 Nov 10:00</text>
<text text-rendering="geometricPrecision" transform="scale(0.85,1)" x="228.235" y="450" fill="#fff" font-size="9.7" textLength="60.000" lengthAdjust="spacing" stroke="#fff" stroke-width="0.1">7 Nov 02:00</text>
<text text-rendering="geometricPrecision" transform="scale(0.85,1)" x="303.529" y="450" fill="#fff" font-size="9.7" textLength="60.000" lengthAdjust="spacing" stroke="#fff" stroke-width="0.1">7 Nov 18:00</text>
<text text-rendering="geometricPrecision" transform="scale(0.85,1)" x="378.824" y="450" fill="#fff" font-size="9.7" textLength="60.000" lengthAdjust="spacing" stroke="#fff" stroke-width="0.1">8 Nov 10:00</text>
<text text-rendering="geometricPrecision" transform="scale(0.85,1)" x="454.118" y="450" fill="#fff" font-size="9.7" textLength="60.000" lengthAdjust="spacing" stroke="#fff" stroke-width="0.1">9 Nov 02:00</text>
<text text-rendering="geometricPrecision" transform="scale(0.85,1)" x="529.412" y="450" fill="#fff" font-size="9.7" textLength="60.000" lengthAdjust="spacing" stroke="#fff" stroke-width="0.1">9 Nov 18:00</text>
<text text-rendering="geometricPrecision" transform="scale(0.85,1)" x="603.529" y="450" fill="#fff" font-size="9.7" textLength="67.647" lengthAdjust="spacing" stroke="#fff" stroke-width="0.1">10 Nov 10:00</text>
<text text-rendering="geometricPrecision" transform="scale(0.85,1)" x="678.824" y="450" fill="#fff" font-size="9.7" textLength="67.647" lengthAdjust="spacing" stroke="#fff" stroke-width="0.1">13 Nov 02:00</text>
<text text-rendering="geometricPrecision" transform="scale(0.85,1)" x="754.118" y="450" fill="#fff" font-size="9.7" textLength="67.647" lengthAdjust="spacing" stroke="#fff" stroke-width="0.1">13 Nov 18:00</text>
<text text-rendering="geometricPrecision" transform="scale(0.85,1)" x="829.412" y="450" fill="#fff" font-size="9.7" textLength="67.647" lengthAdjust="spacing" stroke="#fff" stroke-width="0.1">14 Nov 10:00</text>
<text text-rendering="geometricPrecision" transform="scale(0.85,1)" x="904.706" y="450" fill="#fff" font-size="9.7" textLength="67.647" lengthAdjust="spacing" stroke="#fff" stroke-width="0.1">15 Nov 02:00</text>
<text text-rendering="geometricPrecision" transform="scale(0.85,1)" x="8.824" y="364" fill="#fff" font-size="9.7" textLength="36.471" lengthAdjust="spacing" stroke="#fff" stroke-width="0.1">RSI(13)</text>
<text text-rendering="geometricPrecision" transform="scale(0.85,1)" x="50.000" y="364" fill="#fff" font-size="9.7" textLength="37.647" lengthAdjust="spacing" stroke="#fff" stroke-width="0.1">27.2135</text>
<text text-rendering="geometricPrecision" transform="scale(0.85,1)" x="974.706" y="68" fill="#ffff00" font-size="9.7" textLength="27.647" lengthAdjust="spacing" stroke="#ffff00" stroke-width="0.1">161.8</text>
<text text-rendering="geometricPrecision" transform="scale(0.85,1)" x="925.294" y="149" fill="#ffff00" font-size="9.7" textLength="77.059" lengthAdjust="spacing" stroke="#ffff00" stroke-width="0.1">100.0 - 113.899</text>
<text text-rendering="geometricPrecision" transform="scale(0.85,1)" x="931.765" y="177" fill="#ffff00" font-size="9.7" textLength="70.588" lengthAdjust="spacing" stroke="#ffff00" stroke-width="0.1">78.6 - 113.592</text>
<text text-rendering="geometricPrecision" transform="scale(0.85,1)" x="931.765" y="194" fill="#ffff00" font-size="9.7" textLength="70.588" lengthAdjust="spacing" stroke="#ffff00" stroke-width="0.1">65.0 - 113.396</text>
<text text-rendering="geometricPrecision" transform="scale(0.85,1)" x="931.765" y="198" fill="#ffff00" font-size="9.7" textLength="70.588" lengthAdjust="spacing" stroke="#ffff00" stroke-width="0.1">61.8 - 113.350</text>
<text text-rendering="geometricPrecision" transform="scale(0.85,1)" x="931.765" y="214" fill="#ffff00" font-size="9.7" textLength="70.588" lengthAdjust="spacing" stroke="#ffff00" stroke-width="0.1">50.0 - 113.181</text>
<text text-rendering="geometricPrecision" transform="scale(0.85,1)" x="931.765" y="229" fill="#ffff00" font-size="9.7" textLength="70.588" lengthAdjust="spacing" stroke="#ffff00" stroke-width="0.1">38.2 - 113.012</text>
<text text-rendering="geometricPrecision" transform="scale(0.85,1)" x="931.765" y="248" fill="#ffff00" font-size="9.7" textLength="70.588" lengthAdjust="spacing" stroke="#ffff00" stroke-width="0.1">23.6 - 112.802</text>
<text text-rendering="geometricPrecision" transform="scale(0.85,1)" x="937.647" y="279" fill="#ffff00" font-size="9.7" textLength="64.706" lengthAdjust="spacing" stroke="#ffff00" stroke-width="0.1">0.0 - 112.463</text>
<text text-rendering="geometricPrecision" transform="scale(0.85,1)" x="927.647" y="310" fill="#ffff00" font-size="9.7" textLength="74.706" lengthAdjust="spacing" stroke="#ffff00" stroke-width="0.1">-23.6 - 112.124</text>
<polyline points="3,396 7,397.7 12,397.7 17,393.8 22,395.7 28,395.7 35,388.8 39,390.6 44,388.8 48,391.5 51,391.8 55,398.5 59,401.5 63,385.9 69,385.9 71,384.8 74,385.9 80,391.8 86,396 91,394.3 95,391.5 100,383.1 103,379.2 107,390.1 111,389.3 116,391.8 120,391.8 124,388.8 128,391.5 131,396.5 135,396.5 140,400.7 146,397.7 150,396.8 159,396.8 163,404.4 170,407.7 179,407.7 183,409.9 188,404.9 196,404.9 199,398.8 204,399.8 212,393.1 216,393.1 220,386.8 230,381.8 232,381.8 235,388.5 239,389.8 243,388.8 247,391 251,386.8 255,396 262,402.7 267,399.8 272,400.5 280,396 286,403.2 291,403.2 300,403 305,401 309,401 313,399 319,399 323,401 331,408.9 335,408.9 339,413.9 343,406.5 348,408.9 351,401.5 355,400.2 359,393.5 369,393.1 374,390.1 379,388.5 382,387.6 387,381.8 391,385.1 397,383.8 400,385.1 407,404.9 411,404.9 415,406.9 421,407.2 424,408.9 427,408.9 431,412.7 436,412.7 439,400.7 443,402.7 447,393.8 450,398.5 455,406.5 464,406.5 467,400.5 473,395.7 477,396.8 483,400.5 487,398.5 495,398.5 500,394.8 504,395.2 508,397.7 511,390.5 516,391 519,397.7 523,397.7 527,394.8 531,396.8 535,396.8 540,399.8 543,399.8 547,391.8 551,391 555,391 559,388.5 563,390.5 568,390.5 576,384.8 579,386.4 595,385.9 598,396 600,397.7 604,399.8 609,399.8 613,402.7 618,406 623,403.9 631,404.9 635,394.3 639,391.8 644,385.9 650,386.8 655,391 662,387.6 672,387.6 677,384.8 681,385.1 685,387.6 697,387.6 701,383.4 707,376.4 711,384.3 716,389.3 723,398.5 727,396.5 732,402.7 736,403.9 740,400.3 746,406.8 753,403.4 760,400 764,400 768,402 771,397.4 775,409.5 779,409.7 783,412.1 787,407.8 791,407.8 798,412.8 804,418.8 807,419.1 810,421.2 815,421.2 820,416.4 824,418.2 828,414.5" fill="none" stroke="#1e90ff" stroke-width="2" stroke-linejoin="round" shape-rendering="crispEdges"/>
<path d="M6,9 L13,9 L9.5,13 Z" fill="#fff"/>
</svg>
</body></html>
